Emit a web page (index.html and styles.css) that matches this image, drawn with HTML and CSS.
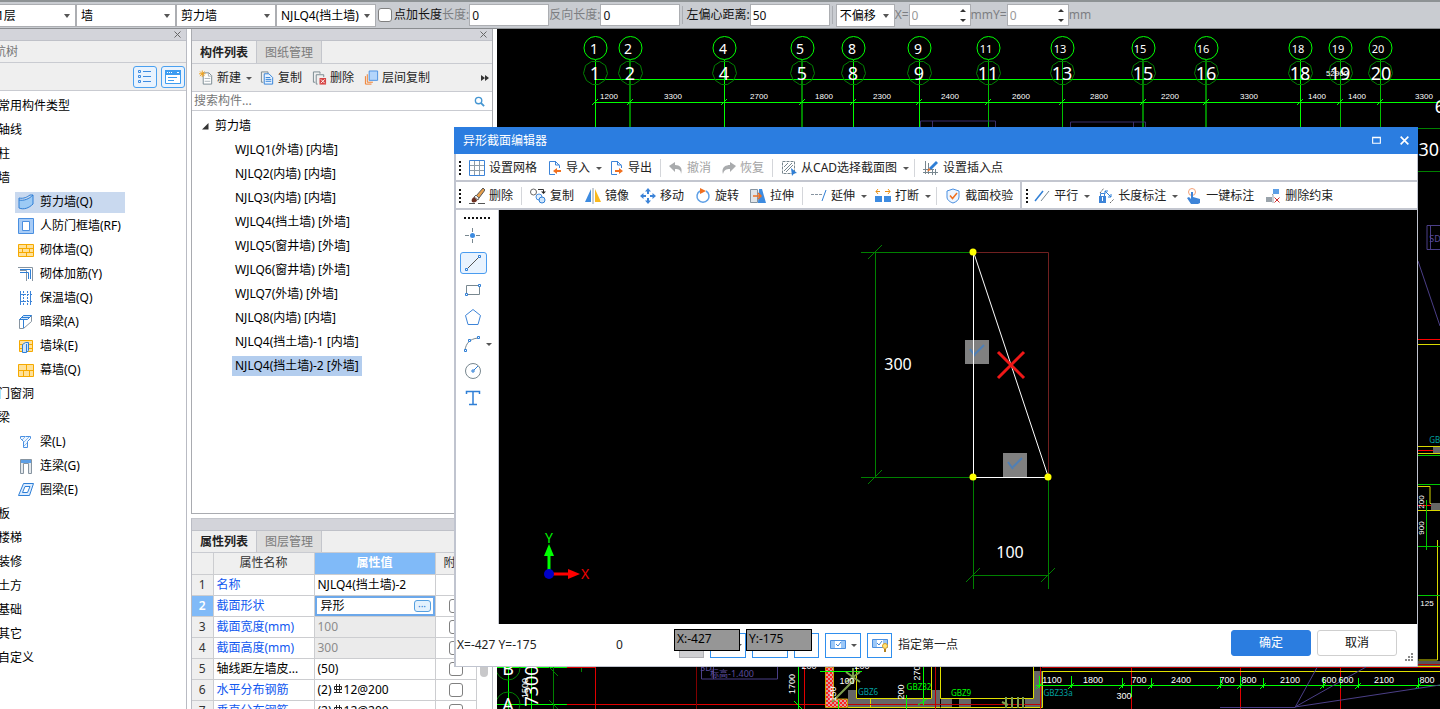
FILE: index.html
```html
<!DOCTYPE html>
<html lang="zh-CN">
<head>
<meta charset="utf-8">
<title>异形截面编辑器</title>
<link rel="stylesheet" href="styles.css">
</head>
<body>
<svg class="defs" aria-hidden="true">
  <symbol id="i-wall" viewBox="0 0 16 16"><path d="M1 6C6 7 11 5 15 1v9C11 14 6 16 1 14z" fill="#9ccaf5" stroke="#2f7fd6"/><path d="M1 6V4c5 1 8-1 11-3h3" fill="none" stroke="#2f7fd6"/></symbol>
  <symbol id="i-frame" viewBox="0 0 16 16"><path d="M.5.5h15v15H.5z" fill="#a8ccf6" stroke="#4a8fe0"/><path d="M4.500 3.500h7v9h-7z" fill="#fff" stroke="#4a8fe0"/></symbol>
  <symbol id="i-brick" viewBox="0 0 16 16"><path d="M.5 2.500h15v12H.5z" fill="#ffe199" stroke="#f5a900"/><path d="M0 6.500h16M0 10.500h16M8.500 2v4M4.500 6v4M11.500 6v4M8.500 10v4" stroke="#f5a900"/></symbol>
  <symbol id="i-rebar" viewBox="0 0 16 16"><path d="M0 1.500h14.500V15M2 4.500h6.500V15" fill="none" stroke="#8794a0"/><path d="M2 3.500h10.500V13M2 6.500h8.500V13" fill="none" stroke="#2f7fd6"/></symbol>
  <symbol id="i-insul" viewBox="0 0 16 16"><path d="M2.500 1v14M12.500 1v14" stroke="#3d84d8"/><path d="M5.500 1v14M9.500 1v14M3 4.500h11M3 11.500h11" stroke="#3d84d8" stroke-dasharray="2 1"/></symbol>
  <symbol id="i-hbeam" viewBox="0 0 16 16"><path d="M1.500 5.500l4-4h8v6l-8 7h-4z" fill="#fff" stroke="#8794a0"/><path d="M1.500 5.500l4-4h8l-4 4zM5.500 6v8M4 3.500h8" fill="#cfe5fb" stroke="#2f7fd6"/></symbol>
  <symbol id="i-pier" viewBox="0 0 16 16"><path d="M1.500 2.500h13v11h-13z" fill="#ffe199" stroke="#f5a900"/><path d="M1 6.500h14M1 10.500h14" stroke="#f5a900"/><path d="M4.500 6.500l3-2h3v8l-2 2h-4z" fill="#cfe5fb" stroke="#2f7fd6"/><path d="M8.500 6v8" stroke="#2f7fd6"/></symbol>
  <symbol id="i-curtain" viewBox="0 0 16 16"><path d="M.5 2.500h15v12H.5z" fill="#ffe199" stroke="#f5a900"/><path d="M0 8.500h16M8.500 2v6M5.500 8v6M11.500 8v6" stroke="#f5a900"/></symbol>
  <symbol id="i-beam" viewBox="0 0 16 16"><path d="M2.500 2.500h10v2l-3 3v6h-4v-6l-3-3z" fill="#eef6ff" stroke="#4a8fe0"/><path d="M4 6l4-4M6 8l5-5M6 12l3-3" stroke="#8abaf0"/></symbol>
  <symbol id="i-link" viewBox="0 0 16 16"><path d="M2.500 1.500h11v14h-3v-10h-5v10h-3z" fill="#e4e9ed" stroke="#8794a0"/><path d="M3 2h10v3H3z" fill="#5d9fe6"/></symbol>
  <symbol id="i-ring" viewBox="0 0 16 16"><path d="M5.500 1.500h10l-4 12H.5z" fill="#dcecff" stroke="#2f7fd6"/><path d="M7 4.500h5l-2.500 6H4.500z" fill="#fff" stroke="#2f7fd6"/></symbol>
  <symbol id="i-new" viewBox="0 0 16 16"><path d="M4.500 2.500h6l3 3v9h-9z" fill="#fff" stroke="#78878f"/><path d="M10 2v4h4M6 8.500h6M6 11.500h6" fill="none" stroke="#a9b2b8"/><path d="M1 1l5 5M6 1L1 6M3.500 0v7M0 3.500h7" stroke="#f0a11c"/></symbol>
  <symbol id="i-copy" viewBox="0 0 16 16"><path d="M3.500 12.500h-2v-11h7v2" fill="none" stroke="#78878f"/><path d="M4.500 3.500h5l4 4v7h-9z" fill="#e8f3ff" stroke="#2f7fd6"/><path d="M6 7.500h5M6 9.500h6M6 11.500h6" stroke="#2f7fd6"/></symbol>
  <symbol id="i-del" viewBox="0 0 16 16"><path d="M3.500 12.500h-2v-11h7v2M6 14.500H4.500v-10h8V7" fill="none" stroke="#78878f"/><path d="M8 8h7v7H8z" fill="#d64545"/><path d="M9.500 9.500l4 4m0-4l-4 4" stroke="#fff"/></symbol>
  <symbol id="i-layer" viewBox="0 0 16 16"><path d="M1.500 6v8.500H8M3.500 4v8.500h6" fill="none" stroke="#f07b28"/><path d="M5.500.5h9v10h-9z" fill="#b3d5fb" stroke="#4a8fe0"/></symbol>
  <symbol id="i-grid" viewBox="0 0 16 16"><path d="M.5.5h15v15H.5z" fill="none" stroke="#3d84d8"/><path d="M1 5.500h14M1 10.500h14M5.500 1v14M10.500 1v14" stroke="#8e9ca8"/></symbol>
  <symbol id="i-import" viewBox="0 0 14 16"><path d="M7 14.500H1.500V1.500h6l4 4V8M7.500 1v4h4" fill="none" stroke="#3d84d8"/><path d="M5 11l4-3v2h4v2H9v2z" fill="#f07020"/></symbol>
  <symbol id="i-export" viewBox="0 0 14 16"><path d="M7 14.500H1.500V1.500h6l4 4V8M7.500 1v4h4" fill="none" stroke="#3d84d8"/><path d="M13 11L9 8v2H5v2h4v2z" fill="#f07020"/></symbol>
  <symbol id="i-undo" viewBox="0 0 14 16"><path d="M0 6l6-4v3c5 0 8 3 6 9 0-4-2-5-6-5v3z" fill="#a9abad"/></symbol>
  <symbol id="i-redo" viewBox="0 0 14 16"><path d="M14 6L8 2v3c-5 0-9 3-7 9 1-4 3-5 7-5v3z" fill="#a9abad"/></symbol>
  <symbol id="i-cad" viewBox="0 0 16 16"><path d="M1.500 1.500h12v12h-12z" fill="none" stroke="#78878f" stroke-dasharray="3 1"/><path d="M3 7l4-4M3 11l8-8M5 12l7-7" stroke="#78878f"/><path d="M10 8l6 5-3 .5-2 2.500z" fill="#2f7fd6"/></symbol>
  <symbol id="i-insert" viewBox="0 0 16 16"><path d="M2.500 1v13M5.500 3v11M0 12.500h15M0 9.500h11M9.500 9v6M12.500 9v6" stroke="#78878f"/><path d="M13 1l2 2-7 7-2-2z" fill="#2f7fd6"/><path d="M6 8l2 2-4 1.500z" fill="#f07020"/></symbol>
  <symbol id="i-brush" viewBox="0 0 16 16"><path d="M14 0l2 2-6 8-3-2z" fill="#e9a04a" stroke="#555"/><path d="M7 7l3 3-1 2-4-3z" fill="#eee" stroke="#666"/><path d="M5 9l3 3c0 2-3 3-5 2-1-2 0-4 2-5z" fill="#6b2f20"/><path d="M0 15.500h6M9 15.500h7" stroke="#555"/></symbol>
  <symbol id="i-dup" viewBox="0 0 16 16"><circle cx="3.500" cy="4" r="3" fill="#fff" stroke="#666"/><circle cx="9" cy="9" r="3" fill="#e3f1ff" stroke="#4a8fe0"/><circle cx="12" cy="12" r="3" fill="#cfe5fb" stroke="#2f7fd6"/><path d="M8 1.500h5.500V4" fill="none" stroke="#333"/><path d="M11 3.500h5L13.500 6z" fill="#222"/></symbol>
  <symbol id="i-mirror" viewBox="0 0 16 16"><path d="M6 1v13H0z" fill="#3d8be0"/><path d="M10 1v13h6z" fill="#fbb91e"/><path d="M8 0v16" stroke="#8e9ca8"/></symbol>
  <symbol id="i-move" viewBox="0 0 16 16"><path d="M8 0l3 3.500H9V6H7V3.500H5zM8 16l-3-3.500h2V10h2v2.500h2zM0 8l3.500-3v2H6v2H3.500v2zM16 8l-3.500 3V9H10V7h2.500V5z" fill="#3d84d8"/></symbol>
  <symbol id="i-rotate" viewBox="0 0 16 16"><path d="M11 3a6 6 0 1 1-6 0" fill="none" stroke="#5d9fe6" stroke-width="1.500"/><path d="M5 0l6 3-6 3z" fill="#f07020"/></symbol>
  <symbol id="i-stretch" viewBox="0 0 16 16"><path d="M.5 1.500h7v13h-7z" fill="#dfe4e8" stroke="#8794a0"/><path d="M9 1h3l4 14H8z" fill="#3d8be0"/><path d="M3 8h7M8 5l3 3-3 3" fill="none" stroke="#f07020" stroke-width="1.500"/></symbol>
  <symbol id="i-extend" viewBox="0 0 16 16"><path d="M0 6.500h11" stroke="#8794a0" stroke-dasharray="3 1"/><path d="M11 13l4-11" stroke="#2f7fd6"/></symbol>
  <symbol id="i-break" viewBox="0 0 16 16"><path d="M0 8h7v6H0zM9 8h7v6H9z" fill="#3d8be0"/><path d="M1 3.500h4M3 1L1 3.500 3 6M10 3.500h5M13 1l2 2.500L13 6" stroke="#e8921a" fill="none"/></symbol>
  <symbol id="i-shield" viewBox="0 0 16 16"><path d="M8 1l6 2v6c0 3-3 5-6 6-3-1-6-3-6-6V3z" fill="#eef6ff" stroke="#4a8fe0"/><path d="M5 7.500l2.500 3L12 5" fill="none" stroke="#f07020" stroke-width="1.500"/></symbol>
  <symbol id="i-para" viewBox="0 0 16 16"><path d="M1 13L9 3" stroke="#2f7fd6" stroke-width="1.500"/><path d="M7 13l8-10" stroke="#78878f"/></symbol>
  <symbol id="i-length" viewBox="0 0 16 16"><path d="M1 8h7v7H1z" fill="#3d84d8"/><path d="M2.500 8V5.500h4V8" fill="none" stroke="#3d84d8"/><path d="M4 9h1v4H4z" fill="#fff"/><path d="M7 3l6 6M7 6V3h3M13 6v3h-3" fill="none" stroke="#2f7fd6"/><path d="M2 5l4-5M12 15l4-4" stroke="#666" stroke-dasharray="2 1"/></symbol>
  <symbol id="i-touch" viewBox="0 0 16 16"><circle cx="6" cy="4" r="3.500" fill="none" stroke="#f3a076"/><path d="M5 4h2v5l7 2v4l-2 1H5l-4-6 2-1 2 2z" fill="#3d84d8"/></symbol>
  <symbol id="i-uncon" viewBox="0 0 16 16"><path d="M8 1h6v5H8z" fill="#5d9fe6"/><path d="M1 9h6v5H1z" fill="#9aa3ab"/><path d="M7 6.500h1V15" stroke="#9aa3ab" fill="none"/><path d="M9.500 9.500l5 5m0-5l-5 5" stroke="#d02a2a"/></symbol>
</svg>

<header class="optbar">
  <label class="combo first"><select aria-label="楼层"><option>1层</option></select></label>
  <label class="combo"><select aria-label="类别"><option>墙</option></select></label>
  <label class="combo"><select aria-label="构件类型"><option>剪力墙</option></select></label>
  <label class="combo"><select aria-label="构件"><option>NJLQ4(挡土墙)</option></select></label>
  <label class="opt"><input type="checkbox" class="tick">点加长度</label>
  <label class="opt dim"><span>长度:</span><input class="field" value="0"></label>
  <label class="opt dim"><span>反向长度:</span><input class="field" value="0"></label>
  <i class="vsep"></i>
  <label class="opt"><span>左偏心距离:</span><input class="field" value="50"></label>
  <i class="vsep"></i>
  <label class="combo small"><select aria-label="偏移方式"><option>不偏移</option></select></label>
  <label class="opt dim"><span>X=</span><span class="spin"><input class="field" value="0" disabled></span><span>mm</span></label>
  <label class="opt dim"><span>Y=</span><span class="spin"><input class="field" value="0" disabled></span><span>mm</span></label>
</header>

<main class="work">
  <nav class="panel nav">
    <div class="grab"><button class="x" aria-label="关闭"><svg viewBox="0 0 7 7"><path d="M.5.5l6 6m0-6l-6 6" stroke="#666"/></svg></button></div>
    <div class="nav-title">导航树</div>
    <div class="nav-tools">
      <button class="view" aria-label="列表"><svg viewBox="0 0 16 16"><path d="M1.500 1.500h2v2h-2zM1.500 6.500h2v2h-2zM1.500 11.500h2v2h-2z" fill="none" stroke="#3d8be0"/><path d="M6 2.500h8M6 7.500h8M6 12.500h8" stroke="#3d8be0"/></svg></button>
      <button class="view" aria-label="窗口"><svg viewBox="0 0 16 16"><path d="M.5 1.500h15v13H.5z" fill="#fff" stroke="#3d9cf0"/><path d="M0 1h16v5H0z" fill="#3d9cf0"/><path d="M2 3.500h1M4 3.500h1M6 3.500h1M12 3.500h2" stroke="#fff"/><path d="M3 8.500h9M3 11.500h6" stroke="#3d9cf0"/></svg></button>
    </div>
    <ul class="tree">
      <li>常用构件类型</li><li>轴线</li><li>柱</li><li>墙</li>
      <li class="leaf"><a href="#" class="on"><svg><use href="#i-wall"/></svg>剪力墙(Q)</a></li>
      <li class="leaf"><a href="#"><svg><use href="#i-frame"/></svg>人防门框墙(RF)</a></li>
      <li class="leaf"><a href="#"><svg><use href="#i-brick"/></svg>砌体墙(Q)</a></li>
      <li class="leaf"><a href="#"><svg><use href="#i-rebar"/></svg>砌体加筋(Y)</a></li>
      <li class="leaf"><a href="#"><svg><use href="#i-insul"/></svg>保温墙(Q)</a></li>
      <li class="leaf"><a href="#"><svg><use href="#i-hbeam"/></svg>暗梁(A)</a></li>
      <li class="leaf"><a href="#"><svg><use href="#i-pier"/></svg>墙垛(E)</a></li>
      <li class="leaf"><a href="#"><svg><use href="#i-curtain"/></svg>幕墙(Q)</a></li>
      <li>门窗洞</li><li>梁</li>
      <li class="leaf"><a href="#"><svg><use href="#i-beam"/></svg>梁(L)</a></li>
      <li class="leaf"><a href="#"><svg><use href="#i-link"/></svg>连梁(G)</a></li>
      <li class="leaf"><a href="#"><svg><use href="#i-ring"/></svg>圈梁(E)</a></li>
      <li>板</li><li>楼梯</li><li>装修</li><li>土方</li><li>基础</li><li>其它</li><li>自定义</li>
    </ul>
  </nav>

  <div class="mid">
    <section class="panel parts">
      <div class="grab"><button class="x" aria-label="关闭"><svg viewBox="0 0 7 7"><path d="M.5.5l6 6m0-6l-6 6" stroke="#666"/></svg></button></div>
      <div class="tabs"><button class="tab on">构件列表</button><button class="tab">图纸管理</button></div>
      <div class="ptools">
        <button><svg><use href="#i-new"/></svg>新建<i class="tri"></i></button>
        <button><svg><use href="#i-copy"/></svg>复制</button>
        <button><svg><use href="#i-del"/></svg>删除</button>
        <button><svg><use href="#i-layer"/></svg>层间复制</button>
        <button class="more" aria-label="更多"><svg viewBox="0 0 8 6"><path d="M0 0l4 3-4 3zM4 0l4 3-4 3z" fill="#333"/></svg></button>
      </div>
      <label class="search"><input placeholder="搜索构件..." aria-label="搜索构件"><svg viewBox="0 0 12 12"><circle cx="5" cy="5" r="3.500" fill="none" stroke="#4596d2" stroke-width="1.500"/><path d="M7.500 7.500L11 11" stroke="#4596d2" stroke-width="2"/></svg></label>
      <ul class="list">
        <li class="root"><svg viewBox="0 0 7 7"><path d="M6.500 0v6.500H0z" fill="#333"/></svg>剪力墙</li>
        <li><span>WJLQ1(外墙) [内墙]</span></li><li><span>NJLQ2(内墙) [内墙]</span></li><li><span>NJLQ3(内墙) [内墙]</span></li>
        <li><span>WJLQ4(挡土墙) [外墙]</span></li><li><span>WJLQ5(窗井墙) [外墙]</span></li><li><span>WJLQ6(窗井墙) [外墙]</span></li>
        <li><span>WJLQ7(外墙) [外墙]</span></li><li><span>NJLQ8(内墙) [内墙]</span></li><li><span>NJLQ4(挡土墙)-1 [内墙]</span></li>
        <li><span class="on">NJLQ4(挡土墙)-2 [外墙]</span></li>
      </ul>
    </section>
    <section class="panel props">
      <div class="grab"></div>
      <div class="tabs"><button class="tab on">属性列表</button><button class="tab">图层管理</button></div>
      <div class="sheet">
        <table>
          <colgroup><col class="c1"><col class="c2"><col class="c3"><col class="c4"></colgroup>
          <tr><th></th><th>属性名称</th><th class="cur">属性值</th><th>附加</th></tr>
          <tr><th>1</th><td class="lnk">名称</td><td>NJLQ4(挡土墙)-2</td><td></td></tr>
          <tr><th class="cur">2</th><td class="lnk">截面形状</td><td class="edit"><div>异形<button aria-label="更多">···</button></div></td><td class="ck"><input type="checkbox" class="tick" aria-label="附加"></td></tr>
          <tr><th>3</th><td class="lnk">截面宽度(mm)</td><td class="off">100</td><td class="ck"><input type="checkbox" class="tick" aria-label="附加"></td></tr>
          <tr><th>4</th><td class="lnk">截面高度(mm)</td><td class="off">300</td><td class="ck"><input type="checkbox" class="tick" aria-label="附加"></td></tr>
          <tr><th>5</th><td>轴线距左墙皮...</td><td>(50)</td><td class="ck"><input type="checkbox" class="tick" aria-label="附加"></td></tr>
          <tr><th>6</th><td class="lnk">水平分布钢筋</td><td>(2)<svg class="bar" viewBox="0 0 10 10"><path d="M1.500 2.500h7v3h-7zM3.500 0v8M6.500 0v8M1 8.500h8" fill="none" stroke="#222"/></svg>12@200</td><td class="ck"><input type="checkbox" class="tick" aria-label="附加"></td></tr>
          <tr><th>7</th><td class="lnk">垂直分布钢筋</td><td>(2)<svg class="bar" viewBox="0 0 10 10"><path d="M1.500 2.500h7v3h-7zM3.500 0v8M6.500 0v8M1 8.500h8" fill="none" stroke="#222"/></svg>12@200</td><td class="ck"><input type="checkbox" class="tick" aria-label="附加"></td></tr>
        </table>
        <div class="scroll"><i></i></div>
      </div>
    </section>
  </div>

  <svg class="cad" viewBox="497 29 943 680" preserveAspectRatio="xMinYMin slice">
    <defs>
      <g id="ax"><circle cx="0.500" cy="48" r="11.500" stroke="#0f0"/><path d="M-3.500 61.500h8l6 4 2 8-3 7-6 4h-6l-6-4-3-7 2-8z" stroke="#008000"/><path d="M-3 105l6-6" stroke="#0f0"/></g>
      <pattern id="hx" width="4" height="4" patternUnits="userSpaceOnUse"><path d="M0 0h4v4H0z" fill="#f22"/><path d="M0 0h2v2H0zM2 2h2v2H2z" fill="#d9a0a0"/></pattern>
    </defs>
    <g fill="none">
      <path d="M595.500 60v67M724.500 60v67M853.500 60v67M919.500 60v67M1300.500 60v67" stroke="#0f0"/>
      <path d="M630 60v67M802 60v67M1143 60v67M1206 60v67" stroke="#008400" stroke-width="2"/>
      <path d="M988.500 60v67M1062.500 60v67M1340.500 60v67M1380.500 60v67" stroke="#00c000"/>
      <path d="M595 79.500h845M595 102.500h845" stroke="#0f0"/>
      <use href="#ax" x="595"/><use href="#ax" x="630"/><use href="#ax" x="724"/><use href="#ax" x="802"/><use href="#ax" x="853"/><use href="#ax" x="919"/><use href="#ax" x="988"/><use href="#ax" x="1062"/><use href="#ax" x="1143"/><use href="#ax" x="1206"/><use href="#ax" x="1300"/><use href="#ax" x="1340"/><use href="#ax" x="1380"/>
      <path d="M920.500 127v-6h75v6M932.500 121v6M1070.500 127v-5h75v5M1133.500 122v5" stroke="#3a2f6b"/>
    </g>
    <g class="a1"><text x="594" y="54">1</text><text x="628" y="54">2</text><text x="723" y="54">4</text><text x="800" y="54">5</text><text x="852" y="54">8</text><text x="918" y="54">9</text></g>
    <g class="a2"><text x="986" y="53">11</text><text x="1060" y="53">13</text><text x="1140" y="53">15</text><text x="1203" y="53">16</text><text x="1298" y="53">18</text><text x="1338" y="53">19</text><text x="1378" y="53">20</text></g>
    <g class="a3"><text x="595" y="80">1</text><text x="630" y="80">2</text><text x="724" y="80">4</text><text x="802" y="80">5</text><text x="853" y="80">8</text><text x="919" y="80">9</text><text x="988" y="80">11</text><text x="1062" y="80">13</text><text x="1143" y="80">15</text><text x="1206" y="80">16</text><text x="1300" y="80">18</text><text x="1340" y="80">19</text><text x="1381" y="80">20</text><text x="1440" y="113">6</text><text x="1434" y="156">300</text></g>
    <g class="dm"><text x="609" y="99">1200</text><text x="673" y="99">3300</text><text x="759" y="99">2700</text><text x="824" y="99">1800</text><text x="882" y="99">2300</text><text x="950" y="99">2400</text><text x="1021" y="99">2600</text><text x="1099" y="99">2800</text><text x="1170" y="99">2200</text><text x="1249" y="99">3300</text><text x="1317" y="99">1400</text><text x="1357" y="99">1400</text><text x="1424" y="99">3300</text><text x="1337" y="76">52900</text></g>
    <g fill="none">
      <path d="M1418 128.500h22M1418 171.500h22" stroke="#008000"/>
      <path d="M1440 225.500h-13v24h13M1418 261l22 65M1430.500 250v-24" stroke="#4b3f87"/>
      <path d="M1418 339.500h22M1418 450.500h22M1418 505.500h22" stroke="#f00"/>
      <path d="M1418 344.500h22M1418 446.500h22v7h-22M1418 486.500h12v17h10M1418 510.500h22M1437.500 540v120h-19" stroke="#d8d800"/>
      <path d="M1433 447h7v6h-7zM1431 503h9v7h-9z" fill="#666"/>
      <path d="M1418 455.500h22M1418 484.500h22M1426.500 500v50M1418 595.500h22M1418 546.500h22" stroke="#00c800"/>
      <path d="M1418 661h22v6h-22z" fill="#555"/><path d="M1418 666.500h22" stroke="#e0e000"/><path d="M1418 664.500h22" stroke="#c00000"/>
    </g>
    <g class="cy"><text x="1437" y="443">GBZ</text></g>
    <g class="dm"><text x="1427" y="606">125</text><text transform="translate(1424 528) rotate(-90)">900</text><text transform="translate(1424 502) rotate(-90)">200</text></g>

    <g fill="none">
      <path d="M497 667.500h70M497 704.500h70M508.500 667v42M531.500 667v42" stroke="#0f0"/>
      <path d="M553.500 667v42M581.500 660v12M549 667l9 9M549 700l9 9" stroke="#008000"/>
      <circle cx="508" cy="668" r="12" stroke="#008000"/><circle cx="508" cy="704" r="12" stroke="#008000"/>
      <path d="M567 667.500h28M595.500 667v42M804.500 667v42M1131.500 667v42M1240.500 667v42M1340.500 667v42M567 704.500h258" stroke="#e00000"/>
      <path d="M696.500 667v42" stroke="#800000"/>
      <path d="M701.500 667v12h76v-12M713.500 667v12" stroke="#4b3f87"/>
      <path d="M825.500 667v40.500h22V699h-14v-32z" fill="url(#hx)" stroke="#c8a000"/>
      <path d="M848 690h8v9h76v9h-84zM932 690h8v17h-8zM941 699h11v8h-11zM959 699h12v8h-12zM1034 671h8v36h-17v-8h9z" fill="#666"/>
      <path d="M856.500 667v31.500h75V667M870.500 699v8M848 707.500h92M940.500 667v31.500h93V667M1042.500 671v36.500h-102M1042 671.500h398" stroke="#e0e000"/>
      <path d="M1042 667.500h398M1040.500 667v42M935.500 667v42M848 704.500h192" stroke="#c00000"/>
      <path d="M798.500 667v42M794 701l9 9M820 671.500h42M838.500 700v9M923.500 667v38M906.500 695v14M918 705l9-6" stroke="#0f0"/>
      <path d="M1036 685.500h404M1039.500 676v12M1071.500 676v12M1122.500 678v10M1131.500 685v12M1151.500 678v10M1220.500 678v10M1240.500 676v12M1263.500 678v10M1323.500 678v10M1340.500 678v10M1358.500 678v10M1418.500 678v10" stroke="#0f0"/>
      <path d="M1036 689l6-6M1068 689l6-6M1119 689l6-6M1148 689l6-6M1217 689l6-6M1237 689l6-6M1260 689l6-6M1320 689l6-6M1355 689l6-6M1415 689l6-6" stroke="#0f0"/>
      <path d="M1220 707.500h75l22-40M1295 707l71-40M1295 707l145-22" stroke="#4b3f87"/>
      <path d="M832 702l22-22M846 672l14 10m-14 0l14-10m-7-4v16M1002 702l6 3M1006 697v11M1012 697v11M1018 697v11M1023 697v11" stroke="#7f9f50" stroke-width="2"/>
    </g>
    <g class="a3"><text x="508" y="675">B</text><text x="508" y="711">A</text><text transform="translate(538 686) rotate(-90)">7300</text></g>
    <g class="dm big"><text transform="translate(528 688) rotate(-90)">1500</text><text transform="translate(795 684) rotate(-90)">1700</text><text transform="translate(836 694) rotate(-90)">150</text><text transform="translate(904 692) rotate(-90)">200</text><text transform="translate(920 673) rotate(-90)">270</text><text x="847" y="684">100</text><text x="862" y="669">200</text><text x="809" y="669">200</text><text x="1052" y="683">1100</text><text x="1093" y="683">1800</text><text x="1139" y="683">700</text><text x="1181" y="683">2400</text><text x="1227" y="683">700</text><text x="1249" y="683">800</text><text x="1290" y="683">2100</text><text x="1329" y="683">600</text><text x="1346" y="683">600</text><text x="1384" y="683">2100</text><text x="1427" y="683">800</text><text x="1124" y="699">300</text></g>
    <g class="pu"><text x="732" y="677">标高-1.400</text><text x="706" y="671">SD</text><text x="1435" y="242">SD</text></g>
    <g class="cy"><text x="868" y="695">GBZ6</text><text x="1058" y="696">GBZ33a</text></g>
    <g class="gr"><text x="919" y="690">GBZ32</text><text x="961" y="696">GBZ9</text></g>
  </svg>
</main>

<section class="dlg" role="dialog" aria-label="异形截面编辑器">
  <div class="dlg-title"><span>异形截面编辑器</span>
    <button aria-label="最大化"><svg viewBox="0 0 10 10"><path d="M1.500 2.500h7v5h-7zM1 2h8" fill="none" stroke="#fff"/></svg></button>
    <button aria-label="关闭"><svg viewBox="0 0 10 10"><path d="M1.500 1.500l7 7m0-7l-7 7" stroke="#fff" stroke-width="1.500"/></svg></button>
  </div>
  <div class="bar1">
    <i class="grip"></i>
    <button><svg><use href="#i-grid"/></svg>设置网格</button>
    <button><svg class="nw"><use href="#i-import"/></svg>导入<i class="tri"></i></button>
    <button><svg class="nw"><use href="#i-export"/></svg>导出</button>
    <i class="sep"></i>
    <button disabled><svg class="nw"><use href="#i-undo"/></svg>撤消</button>
    <button disabled><svg class="nw"><use href="#i-redo"/></svg>恢复</button>
    <i class="sep"></i>
    <button><svg><use href="#i-cad"/></svg>从CAD选择截面图<i class="tri"></i></button>
    <i class="sep"></i>
    <button><svg><use href="#i-insert"/></svg>设置插入点</button>
  </div>
  <div class="bar1">
    <i class="grip"></i>
    <button><svg><use href="#i-brush"/></svg>删除</button>
    <i class="sep"></i>
    <button><svg><use href="#i-dup"/></svg>复制</button>
    <button><svg><use href="#i-mirror"/></svg>镜像</button>
    <button><svg><use href="#i-move"/></svg>移动</button>
    <button><svg><use href="#i-rotate"/></svg>旋转</button>
    <button><svg><use href="#i-stretch"/></svg>拉伸</button>
    <i class="sep"></i>
    <button><svg><use href="#i-extend"/></svg>延伸<i class="tri"></i></button>
    <button><svg><use href="#i-break"/></svg>打断<i class="tri"></i></button>
    <i class="sep"></i>
    <button><svg><use href="#i-shield"/></svg>截面校验</button>
    <i class="split"></i>
    <i class="grip"></i>
    <button><svg><use href="#i-para"/></svg>平行<i class="tri"></i></button>
    <button><svg><use href="#i-length"/></svg>长度标注<i class="tri"></i></button>
    <button><svg><use href="#i-touch"/></svg>一键标注</button>
    <button><svg><use href="#i-uncon"/></svg>删除约束</button>
  </div>
  <div class="dlg-body">
    <div class="tools">
      <i class="hgrip"></i>
      <button aria-label="点"><svg viewBox="0 0 18 18"><path d="M8.500 1v4M8.500 12v4M1 8.500h4M12 8.500h4" stroke="#78878f"/><circle cx="8.500" cy="8.500" r="2.500" fill="#3d8be0"/></svg></button>
      <button class="on" aria-label="直线"><svg viewBox="0 0 18 18"><path d="M4 14L15 3" stroke="#555"/><path d="M1.500 14.500h2v2h-2zM14.500 1.500h2v2h-2z" fill="#fff" stroke="#2f7fd6"/></svg></button>
      <button aria-label="矩形"><svg viewBox="0 0 18 18"><path d="M2.500 4.500h13v9h-13z" fill="none" stroke="#78878f"/><path d="M1.500 12.500h2v2h-2zM14.500 3.500h2v2h-2z" fill="#fff" stroke="#2f7fd6"/></svg></button>
      <button aria-label="多边形"><svg viewBox="0 0 18 18"><path d="M9 1.500l7.500 6-2.500 9H4l-2.500-9z" fill="none" stroke="#3d84d8"/></svg></button>
      <button aria-label="圆弧"><svg viewBox="0 0 18 18"><path d="M1 15C2 9 5 4 14 3" fill="none" stroke="#78878f"/><path d="M.5 14.500h2v2h-2zM4.500 4.500h2v2h-2zM13.500 1.500h2v2h-2z" fill="#fff" stroke="#2f7fd6"/></svg><i class="tri"></i></button>
      <button aria-label="圆"><svg viewBox="0 0 18 18"><circle cx="9" cy="9" r="7.500" fill="none" stroke="#78878f"/><path d="M9 9l5-5" stroke="#2f7fd6"/><path d="M8 8h2v2H8z" fill="#fff" stroke="#2f7fd6"/></svg></button>
      <button aria-label="文字"><svg viewBox="0 0 18 18"><path d="M2.500 5V2.500h13V5M9 2v14M5 15.500h8" fill="none" stroke="#2f7fd6" stroke-width="1.500"/></svg></button>
    </div>
    <svg class="view3" viewBox="499 210 918 414" preserveAspectRatio="xMidYMid meet">
      <g fill="none">
        <path d="M861 252.500h112M861 477.500h112M875.500 252v225M973.500 477v112M1048.500 477v112M973 575.500h75M868 259l14-14M868 484l14-14M966 582l14-14M1041 582l14-14" stroke="#008000"/>
        <path d="M973 252.500h75.500V477" stroke="#702020"/>
        <path d="M973.500 252v225.500h75L973.500 252" stroke="#fff"/>
        <path d="M998 352l26 26m0-26l-26 26" stroke="#f01818" stroke-width="3"/>
      </g>
      <circle cx="973" cy="252" r="3.500" fill="#ff0"/><circle cx="973" cy="477" r="3.500" fill="#ff0"/><circle cx="1048" cy="477" r="3.500" fill="#ff0"/>
      <path d="M965 340h24v24h-24zM1003 453h24v24h-24z" fill="#808080"/>
      <path d="M984 345l-9 9M970 349l5 7M1022 458l-9 9M1008 462l5 7" fill="none" stroke="#4f7fb5" stroke-width="2"/>
      <path d="M973.500 340v24M1003 477.500h24" stroke="#fff"/>
      <path d="M549 573v-20" stroke="#0f0" stroke-width="3"/><path d="M549 544l5 12h-10z" fill="#0f0"/>
      <path d="M549 574h20" stroke="#f00" stroke-width="3"/><path d="M580 574l-12-5v10z" fill="#f00"/>
      <circle cx="549" cy="574" r="5" fill="#0000c8"/>
      <g class="vt"><text x="898" y="370">300</text><text x="1010" y="558">100</text><text x="549" y="543" fill="#00f000" class="s">Y</text><text x="585" y="579" fill="#f00000" class="s">X</text></g>
    </svg>
  </div>
  <footer class="status">
    <span class="pos">X=-427 Y=-175</span><span class="zero">0</span>
    <button class="sb grey" aria-label="捕捉"></button>
    <button class="sb wide" aria-label="正交"><svg viewBox="0 0 16 14"><path d="M.5 1.500h15v9H.5z" fill="#d9eafd" stroke="#4a8fe0"/></svg><i class="tri"></i></button>
    <button class="sb wide" aria-label="动态输入"></button>
    <button class="sb" aria-label="标注"></button>
    <button class="sb wide" aria-label="约束"><svg viewBox="0 0 16 14"><path d="M.5 2.500h15v8H.5z" fill="#9cc8f8" stroke="#4a8fe0"/><path d="M5 3h6v7H5z" fill="#fff"/><path d="M6 6l2 2 3-4" fill="none" stroke="#3d84d8"/></svg><i class="tri"></i></button>
    <button class="sb" aria-label="提示"><svg viewBox="0 0 16 14"><path d="M.5 1.500h15v8H.5z" fill="#9cc8f8" stroke="#4a8fe0"/><path d="M5 2h6v7H5z" fill="#fff"/><path d="M5 5l2 2 3-4" fill="none" stroke="#3d84d8"/><circle cx="13" cy="8" r="2.500" fill="#ffe680" stroke="#e0a020"/><path d="M12 11h2v3h-2z" fill="#b08020"/></svg></button>
    <span class="hint">指定第一点</span>
    <button class="btn ok">确定</button><button class="btn">取消</button>
    <svg class="sizer" viewBox="0 0 9 9"><path d="M6 0h2v2H6zM3 3h2v2H3zM6 3h2v2H6zM0 6h2v2H0zM3 6h2v2H3zM6 6h2v2H6z" fill="#888"/></svg>
    <output class="tip tx">X:-427</output><output class="tip ty">Y:-175</output>
  </footer>
</section>
</body>
</html>
```

FILE: styles.css
```css
* { box-sizing: border-box; }
body {
  margin: 0; height: 100vh; overflow: hidden; position: relative;
  display: flex; flex-direction: column;
  font: 12px/16px "Noto Sans", "Noto Sans CJK SC", sans-serif; color: #1e1e1e; background: #fff;
}
button, input, select { font: inherit; color: inherit; }
button { border: 0; background: none; padding: 0; white-space: nowrap; }
ul { list-style: none; margin: 0; padding: 0; }
svg { display: block; flex: none; }
.defs { position: absolute; width: 0; height: 0; }

.optbar { display: flex; align-items: center; flex: none; height: 29px; border-top: 2px solid #8d9294; border-bottom: 1px solid #8a8d90; background: #c9ccd1; overflow: hidden; white-space: nowrap; }
.combo { position: relative; flex: none; width: 100px; height: 23px; border: 1px solid #acaeb2; background: #fff; }
.combo.first { width: 84px; margin-left: -8px; }
.combo.small { width: 59px; }
.combo select { appearance: none; width: 100%; height: 100%; border: 0; padding: 1px 0 0 4px; background: transparent; color: #000; }
.combo.small select { padding-left: 3px; }
.combo::after { content: ""; position: absolute; right: 5px; top: 9px; border: 3px solid transparent; border-top: 4px solid #555; border-bottom: 0; }
.opt { display: flex; align-items: center; flex: none; color: #111; }
.dim { color: #7c7e82; }
.tick { appearance: none; width: 14px; height: 14px; margin: 0; border: 1px solid #808080; border-radius: 3px; background: #fff; }
.optbar .tick { margin: 0 2px; }
.field { width: 80px; height: 22px; border: 1px solid #acaeb2; padding: 1px 2px 0; background: #fff; color: #111; }
.field:disabled { color: #999; }
.vsep { flex: none; width: 1px; height: 18px; margin: 0 3px 0 2px; background: #aaadb2; }
.spin { position: relative; }
.spin .field { width: 62px; }
.spin::before, .spin::after { content: ""; position: absolute; right: 5px; border: 3px solid transparent; }
.spin::before { top: 5px; border-top: 0; border-bottom: 3px solid #333; }
.spin::after { bottom: 4px; border-bottom: 0; border-top: 3px solid #333; }

.work { flex: 1; display: flex; min-height: 0; }
.panel { border: 1px solid #b9bbc3; border-top: 0; background: #fff; overflow: hidden; }
.nav { flex: none; width: 187px; border-left: 0; border-bottom: 0; }
.grab { display: flex; justify-content: flex-end; align-items: center; height: 12px; padding-right: 5px; background: #d3d4da; border-bottom: 1px solid #bfc1c8; }
.x svg { width: 7px; height: 7px; }
.nav-title { height: 22px; padding-top: 3px; text-indent: -18px; color: #777; background: #efefef; border-bottom: 1px solid #c9cbd1; }
.nav-tools { display: flex; justify-content: flex-end; align-items: center; gap: 4px; height: 28px; padding-right: 1px; background: #efefef; border-bottom: 1px solid #c9cbd1; }
.view { display: grid; place-items: center; width: 24px; height: 22px; border: 1px solid #4aa0f0; border-radius: 3px; background: #e9f3fe; }
.view svg { width: 16px; height: 16px; }
.tree { padding-top: 3px; }
.tree li { height: 24px; line-height: 24px; text-indent: -2px; white-space: nowrap; color: #000; }
.leaf { display: flex; align-items: center; padding-left: 15px; }
.tree .leaf { text-indent: 0; }
.leaf a { display: flex; align-items: center; gap: 6px; width: 110px; height: 21px; padding-left: 3px; color: #000; text-decoration: none; }
.leaf svg { width: 16px; height: 16px; }
.leaf a.on { background: #c9d9ef; }

.mid { flex: none; width: 302px; margin: 0 4px; display: flex; flex-direction: column; gap: 4px; }
.parts { flex: none; height: 485px; border-color: #a9abb0; }
.tabs { display: flex; height: 23px; background: #efefef; border-bottom: 1px solid #c9cbd1; }
.tab { width: 65px; padding-top: 1px; border-right: 1px solid #c4c6cc; background: #dedede; color: #7a7a7a; }
.tab.on { background: #efefef; color: #222; font-weight: 600; }
.ptools { display: flex; align-items: center; gap: 10px; height: 28px; padding: 1px 3px 0 7px; background: #efefef; border-bottom: 1px solid #c9cbd1; }
.ptools button { display: flex; align-items: center; gap: 3px; }
.ptools svg { width: 15px; height: 16px; }
.ptools .more { margin-left: auto; }
.ptools .more svg { width: 8px; height: 6px; }
.tri { flex: none; border: 3px solid transparent; border-top: 3px solid #555; border-bottom: 0; }
.ptools .tri { margin: 0 -2px 0 2px; }
.search { display: flex; align-items: center; height: 19px; padding-right: 7px; border-bottom: 1px solid #c9cbd1; }
.search input { flex: 1; min-width: 0; border: 0; padding: 0 2px; height: 16px; outline: 0; }
.search input::placeholder { color: #777; }
.search svg { width: 11px; height: 11px; }
.list { padding-top: 3px; color: #000; }
.list li { display: flex; align-items: center; height: 24px; padding-left: 40px; }
.list .root { padding-left: 10px; gap: 6px; }
.list .root svg { width: 7px; height: 7px; }
.list span { padding: 2px 3px; }
.list span.on { background: #b3cdee; }

.props { flex: 1; min-height: 0; border-top: 1px solid #c4c6cc; border-bottom: 0; }
.props .tabs { height: 22px; }
.sheet { display: flex; }
table { table-layout: fixed; border-collapse: collapse; width: 284px; flex: none; color: #000; }
.c1 { width: 21px; } .c2 { width: 101px; } .c3 { width: 121px; } .c4 { width: 41px; }
th, td { height: 21px; padding: 0 3px; border: 1px solid #cccdd0; border-left: 0; border-top: 0; text-align: left; font-weight: 400; line-height: 16px; white-space: nowrap; overflow: hidden; }
th { padding: 0; background: #efefef; color: #333; text-align: center; }
th:last-child { text-align: left; padding-left: 8px; }
th.cur { background: #80baf8; color: #fff; font-weight: 600; }
.lnk { color: #1259f0; }
.off { background: #ebebeb; color: #8b8b8b; }
.edit { padding: 0; }
.edit div { display: flex; align-items: center; justify-content: space-between; height: 20px; padding: 0 2px 0 4px; border: 2px solid #6ca8ea; }
.edit button { width: 17px; height: 12px; border: 1px solid #559fdf; border-radius: 3px; background: #e3f1fd; color: #2f7fd6; font-size: 10px; line-height: 8px; }
.ck .tick { display: block; margin-left: 10px; }
.bar { display: inline-block; width: 10px; height: 10px; margin: 0 1px; }
.scroll { flex: 1; background: #fff; display: flex; justify-content: center; }
.scroll i { width: 8px; height: 124px; border-radius: 4px; background: #c8c8ca; }

.cad { flex: 1; min-width: 0; height: 100%; background: #000; }
.cad text { text-anchor: middle; fill: #fff; }
.a1 { font-size: 14px; }
.a2 { font-size: 11px; }
.a3 { font-size: 18px; }
.dm { font: 8px "Liberation Sans Narrow", "Liberation Sans", sans-serif; }
.dm.big { font-size: 9px; }
.cad .pu text { fill: #5a4c9c; font-size: 9px; }
.cad .cy text { fill: #00a0a0; font-size: 8px; }
.cad .gr text { fill: #0f0; font-size: 8px; }

.dlg { position: absolute; left: 454px; right: 22px; top: 127px; bottom: 42px; display: flex; flex-direction: column; border: 1px solid #c0c4cf; border-top: 0; border-left-width: 2px; background: #fff; }
.dlg-title { display: flex; align-items: center; flex: none; gap: 17px; height: 27px; margin: 0 -1px 0 -2px; padding: 0 8px 0 9px; background: #2b7de0; color: #fff; }
.dlg-title span { flex: 1; }
.dlg-title svg { width: 11px; height: 11px; }
.bar1 { display: flex; align-items: center; gap: 1px; flex: none; height: 28px; padding-top: 2px; border-bottom: 2px solid #c3c6cf; overflow: hidden; }
.bar1 button { display: flex; align-items: center; gap: 4px; height: 22px; padding: 0 5px; color: #222; }
.bar1 button:disabled { color: #a4a4a4; }
.bar1 button svg { width: 16px; height: 16px; }
.bar1 button .nw { width: 14px; }
.bar1 .tri { margin: 0 0 0 2px; }
.bar1 button:has(.tri) { padding-right: 2px; }
.grip { flex: none; width: 2px; height: 14px; margin: 0 2px 0 3px; background: repeating-linear-gradient(#111 0 2px, transparent 2px 4px); }
.sep { flex: none; width: 1px; height: 18px; margin: 0 2px; background: #d4d6da; }
.split { flex: none; width: 2px; height: 28px; margin: 0 0 0 1px; background: #c3c6cf; }
.split + .grip { margin: 0 0 0 3px; }
.dlg-body { flex: 1; display: flex; min-height: 0; }
.tools { flex: none; width: 43px; border-right: 1px solid #c3c6cf; padding: 7px 0 0 4px; }
.hgrip { display: block; width: 26px; height: 2px; margin: 0 0 6px 4px; background: repeating-linear-gradient(90deg, #111 0 2px, transparent 2px 4px); }
.tools button { display: flex; align-items: center; gap: 4px; width: 27px; height: 22px; margin-bottom: 5px; padding-left: 3px; border: 1px solid transparent; border-radius: 3px; }
.tools button.on { border-color: #4a9cf0; background: #e9f3fe; }
.tools svg { width: 18px; height: 18px; }
.view3 { flex: 1; min-width: 0; height: 100%; background: #000; }
.vt text { text-anchor: middle; font-size: 16px; }
.vt text:not(.s) { fill: #fff; }
.vt .s { font-size: 14px; }
.status { position: relative; flex: none; display: flex; align-items: center; gap: 6px; height: 42px; color: #222; }
.pos { width: 160px; padding-left: 1px; margin-right: -6px; }
.zero { width: 57px; }
.sb { display: flex; align-items: center; justify-content: center; gap: 5px; flex: none; width: 25px; height: 25px; border: 1px solid #2f8fee; }
.sb.wide { width: 36px; }
.sb.grey { background: #cfcfd2; border-color: #b0b0b4; }
.sb svg { width: 16px; height: 14px; }
.btn { flex: none; width: 80px; height: 26px; margin-bottom: 4px; border: 1px solid #cfcfcf; border-radius: 3px; background: #fff; color: #111; }
.btn.ok { margin-left: auto; border-color: #2b7de0; background: #2b7de0; color: #fff; }
.sizer { width: 9px; height: 9px; align-self: flex-end; margin: 0 3px 4px 2px; }
.tip { position: absolute; top: 5px; width: 66px; height: 22px; padding: 1px 2px; border: 1px solid #000; background: #969696; color: #000; }
.tx { left: 218px; }
.ty { left: 290px; }
```
